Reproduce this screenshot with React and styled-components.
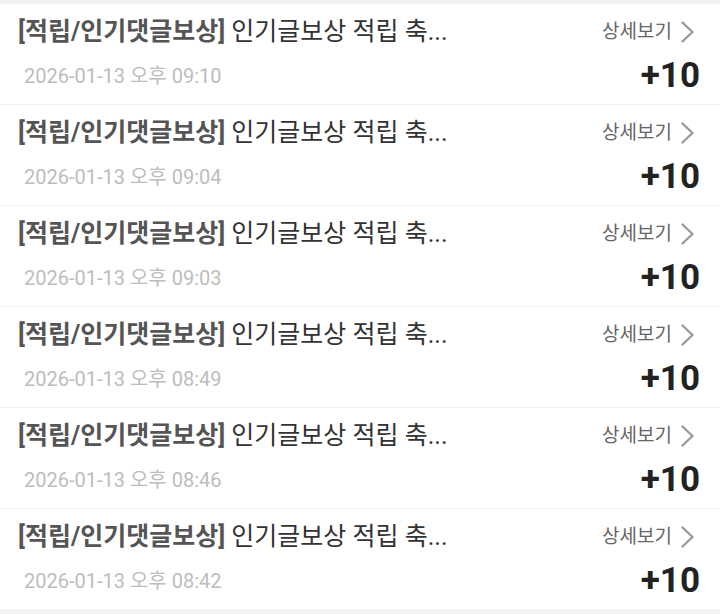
import React from "react";
import styled, { createGlobalStyle } from "styled-components";

const Global = createGlobalStyle`
  html, body { margin: 0; padding: 0; background: #f5f5f5; }
  body { font-family: Roboto, "Noto Sans CJK KR", sans-serif; }
`;

const List = styled.ul`
  list-style: none;
  margin: 0;
  padding: 4px 0 0;
  display: flex;
  flex-direction: column;
  gap: 1px;
  background: #f2f2f2;
  min-height: 614px;
  box-sizing: border-box;
`;

const Row = styled.li`
  background: #fff;
  height: 100px;
  box-sizing: border-box;
  display: grid;
  grid-template-columns: 1fr auto;
  grid-template-rows: 55px 33px;
  align-items: center;
  padding: 0 20px 0 18px;
`;

const Title = styled.div`
  font-size: 25px;
  line-height: 30px;
  color: #333;
  white-space: nowrap;
`;

const Tag = styled.span`
  font-weight: 700;
  color: #555;
`;

const Date = styled.div`
  padding-left: 6px;
  font-size: 20px;
  line-height: 24px;
  color: #bdbdbd;
`;

const Detail = styled.div`
  display: flex;
  align-items: center;
  gap: 8px;
  margin-right: 5px;
  font-size: 19px;
  line-height: 24px;
  color: #666;
`;

const Points = styled.div`
  justify-self: end;
  font-size: 35px;
  font-weight: 700;
  color: #222;
  line-height: 36px;
`;

const Chevron = () => (
  <svg width="15" height="22" viewBox="0 0 15 22" fill="none">
    <path d="M2.5 1.5l10 9.5-10 9.5" stroke="#9a9a9a" strokeWidth="2.4" strokeLinecap="round" strokeLinejoin="round" />
  </svg>
);

const items = [
  "2026-01-13 오후 09:10",
  "2026-01-13 오후 09:04",
  "2026-01-13 오후 09:03",
  "2026-01-13 오후 08:49",
  "2026-01-13 오후 08:46",
  "2026-01-13 오후 08:42",
];

export default function App() {
  return (
    <>
      <Global />
      <List>
        {items.map((d) => (
          <Row key={d}>
            <Title>
              <Tag>[적립/인기댓글보상]</Tag> 인기글보상 적립 축...
            </Title>
            <Detail>
              상세보기 <Chevron />
            </Detail>
            <Date>{d}</Date>
            <Points>+10</Points>
          </Row>
        ))}
      </List>
    </>
  );
}
